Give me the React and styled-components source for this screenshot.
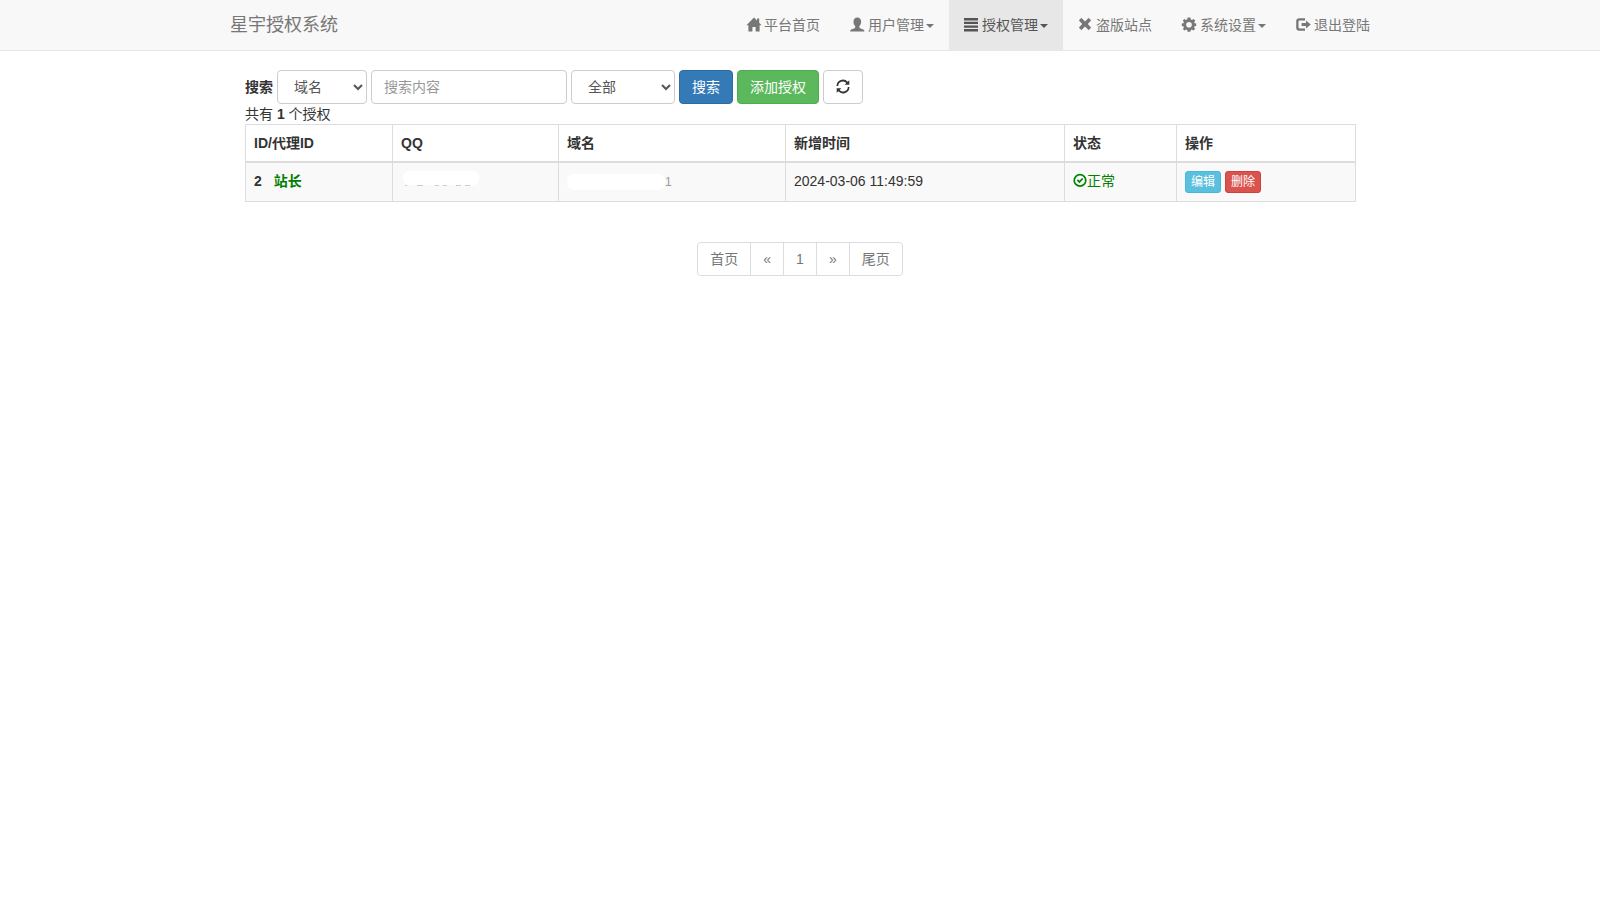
import { useState } from 'react';
import styled, { createGlobalStyle } from 'styled-components';

const GlobalStyle = createGlobalStyle`
  * {
    box-sizing: border-box;
  }
  body {
    margin: 0;
    background-color: #fff;
    color: #333;
    font-family: 'Liberation Sans', 'Noto Sans CJK SC', sans-serif;
    font-size: 14px;
    line-height: 20px;
  }
`;

const Navbar = styled.nav`
  background-color: #f8f8f8;
  border-bottom: 1px solid #e7e7e7;
`;
const NavInner = styled.div`
  display: flex;
  justify-content: space-between;
  max-width: 1170px;
  margin: 0 auto;
`;
const Brand = styled.a`
  padding: 15px;
  color: #777;
  font-size: 18px;
  text-decoration: none;
`;
const NavList = styled.ul`
  display: flex;
  margin: 0;
  padding: 0;
  list-style: none;
`;
const NavLink = styled.a`
  display: flex;
  align-items: center;
  gap: 4px;
  height: 50px;
  padding: 0 15px;
  background-color: ${props => (props.$active ? '#e7e7e7' : 'transparent')};
  color: ${props => (props.$active ? '#555' : '#777')};
  text-decoration: none;
`;
const Caret = styled.span`
  display: inline-block;
  margin-left: 2px;
  border-top: 4px solid;
  border-right: 4px solid transparent;
  border-left: 4px solid transparent;
  vertical-align: middle;
`;
const Svg = styled.svg`
  display: inline-block;
  flex: none;
  width: 14px;
  height: 14px;
  overflow: visible;
  fill: currentColor;
  vertical-align: -2px;
`;

const Main = styled.main`
  max-width: 1170px;
  margin: 0 auto;
  padding: 19px 30px;
`;
const SearchForm = styled.form`
  display: flex;
  align-items: center;
  gap: 4px;
`;
const Label = styled.label`
  font-weight: bold;
`;
const Select = styled.select`
  width: ${props => props.$width};
  height: 34px;
  padding: 6px 12px;
  border: 1px solid #ccc;
  border-radius: 4px;
  background-color: #fff;
  color: #555;
  font: inherit;
`;
const Input = styled.input`
  width: 196px;
  height: 34px;
  padding: 6px 12px;
  border: 1px solid #ccc;
  border-radius: 4px;
  color: #555;
  font: inherit;
  &::placeholder {
    color: #999;
  }
`;
const buttonColors = {
  primary: ['#337ab7', '#2e6da4', '#fff'],
  success: ['#5cb85c', '#4cae4c', '#fff'],
  info: ['#5bc0de', '#46b8da', '#fff'],
  danger: ['#d9534f', '#d43f3a', '#fff'],
  normal: ['#fff', '#ccc', '#333'],
};
const Button = styled.button`
  height: 34px;
  padding: 0 12px;
  border: 1px solid ${props => buttonColors[props.$color][1]};
  border-radius: 4px;
  background-color: ${props => buttonColors[props.$color][0]};
  color: ${props => buttonColors[props.$color][2]};
  font: inherit;
  cursor: pointer;
`;
const SmallButton = styled(Button)`
  height: 22px;
  padding: 0 5px;
  border-radius: 3px;
  font-size: 12px;
  line-height: 18px;
`;
const Actions = styled.div`
  display: flex;
  gap: 4px;
`;

const Table = styled.table`
  width: 100%;
  border: 1px solid #ddd;
  border-collapse: collapse;
  table-layout: fixed;
`;
const Th = styled.th`
  width: ${props => props.$width};
  padding: 8px;
  border: 1px solid #ddd;
  border-bottom-width: 2px;
  text-align: left;
`;
const Td = styled.td`
  padding: 8px;
  border: 1px solid #ddd;
  background-color: #f9f9f9;
  vertical-align: top;
`;
const Owner = styled.b`
  margin-left: 12px;
  color: green;
`;
const Status = styled.span`
  color: green;
`;
const MaskRow = styled.div`
  display: flex;
  flex-direction: ${props => (props.$column ? 'column' : 'row')};
  align-items: ${props => (props.$column ? 'flex-start' : 'center')};
  height: 22px;
  padding-left: ${props => (props.$column ? '2px' : '0')};
  color: #999;
`;
const Mask = styled.span`
  width: ${props => props.$width};
  height: ${props => props.$height};
  border-radius: 6px;
  background-color: #fff;
`;
const MaskTail = styled.span`
  font-size: 12px;
`;
const MaskMarks = styled.svg`
  width: 74px;
  height: 2px;
  fill: #ccc;
`;

const Pagination = styled.ul`
  display: flex;
  justify-content: center;
  margin: 40px 0 20px;
  padding: 0;
  list-style: none;
`;
const PageItem = styled.li`
  & + & {
    margin-left: -1px;
  }
  &:first-child a {
    border-radius: 4px 0 0 4px;
  }
  &:last-child a {
    border-radius: 0 4px 4px 0;
  }
`;
const PageLink = styled.a`
  display: block;
  padding: 6px 12px;
  border: 1px solid #ddd;
  color: #777;
  text-decoration: none;
`;

const icons = {
  home: (
    <path d="M8 -0.6L15.6 7.3H13.6V13.6H9.6V9H6.4V13.6H2.4V7.3H0.4L8 -0.6ZM11 0.4H13.2V5H11Z" />
  ),
  user: (
    <path d="M7.3 -0.4C9.8 -0.4 11.1 1.4 11.1 4C11.1 5.8 10.4 7.2 9.4 8V9.2C9.4 9.9 9.9 10.1 10.6 10.4L13.2 11.4C14.1 11.8 14.4 12.3 14.4 13.6H0.2C0.2 12.3 0.5 11.8 1.4 11.4L4 10.4C4.7 10.1 5.2 9.9 5.2 9.2V8C4.2 7.2 3.5 5.8 3.5 4C3.5 1.4 4.8 -0.4 7.3 -0.4Z" />
  ),
  list: <path d="M0 0H14V2.4H0ZM0 3.7H14V6.1H0ZM0 7.4H14V9.8H0ZM0 11.1H14V13.5H0Z" />,
  remove: (
    <path d="M3.8 0.2L7 3.4L10.2 0.2Q10.6 -0.2 11 0.2L12.8 2Q13.2 2.4 12.8 2.8L9.8 6L12.8 9.2Q13.2 9.6 12.8 10L11 11.8Q10.6 12.2 10.2 11.8L7 8.6L3.8 11.8Q3.4 12.2 3 11.8L1.2 10Q0.8 9.6 1.2 9.2L4.2 6L1.2 2.8Q0.8 2.4 1.2 2L3 0.2Q3.4 -0.2 3.8 0.2Z" />
  ),
  cog: (
    <path
      fillRule="evenodd"
      d="M5.6 -0.4H8.4L8.8 1.4L10 1.9L11.6 0.9L13.2 2.6L12.2 4.2L12.6 5.2L14.2 5.6V7.9L12.6 8.3L12.1 9.4L13.1 11L11.5 12.6L9.9 11.6L8.8 12.1L8.4 13.7H5.6L5.2 12.1L4.1 11.6L2.5 12.6L0.9 11L1.9 9.4L1.4 8.3L-0.2 7.9V5.6L1.4 5.2L1.9 4.2L0.8 2.6L2.4 0.9L4 1.9L5.2 1.4ZM7 4A2.8 2.8 0 1 0 7 9.6A2.8 2.8 0 1 0 7 4Z"
    />
  ),
  logout: (
    <path d="M9 0.3V2.5H3.8Q2.5 2.5 2.5 3.8V9.2Q2.5 10.5 3.8 10.5H9V12.7H3.2Q0.2 12.7 0.2 9.7V3.3Q0.2 0.3 3.2 0.3ZM10 2.6L14.8 6.5L10 10.4V8H5.6V5H10Z" />
  ),
  refresh: (
    <path d="M0.5 6A6.5 6.5 0 0 1 11.7 1.7L13.3 0.2V4.8H8.6L10.4 3A4.7 4.7 0 0 0 2.2 6ZM13.5 7A6.5 6.5 0 0 1 2.3 11.3L0.7 12.8V8.2H5.4L3.6 10A4.7 4.7 0 0 0 11.8 7Z" />
  ),
  ok: (
    <path
      fillRule="evenodd"
      d="M7 -0.2A6.6 6.6 0 1 0 7 13A6.6 6.6 0 1 0 7 -0.2ZM7 1.5A4.9 4.9 0 1 1 7 11.3A4.9 4.9 0 1 1 7 1.5ZM3.8 6.5L5 5.3L6.4 6.7L9.1 3.9L10.3 5.1L6.4 9.2Z"
    />
  ),
};

const Icon = ({ name }) => (
  <Svg viewBox="0 0 14 14" aria-hidden="true">
    {icons[name]}
  </Svg>
);

const menus = [
  { icon: 'home', text: '平台首页' },
  { icon: 'user', text: '用户管理', caret: true },
  { icon: 'list', text: '授权管理', caret: true, active: true },
  { icon: 'remove', text: '盗版站点' },
  { icon: 'cog', text: '系统设置', caret: true },
  { icon: 'logout', text: '退出登陆' },
];

const columns = [
  { text: 'ID/代理ID', width: '147px' },
  { text: 'QQ', width: '166px' },
  { text: '域名', width: '227px' },
  { text: '新增时间', width: '279px' },
  { text: '状态', width: '112px' },
  { text: '操作', width: '179px' },
];

const pages = ['首页', '«', '1', '»', '尾页'];

const App = () => {
  const [type, setType] = useState('域名');
  const [keyword, setKeyword] = useState('');
  const [state, setState] = useState('全部');

  return (
    <>
      <GlobalStyle />
      <Navbar>
        <NavInner>
          <Brand href="#">星宇授权系统</Brand>
          <NavList>
            {menus.map(menu => (
              <li key={menu.text}>
                <NavLink href="#" $active={menu.active}>
                  <Icon name={menu.icon} />
                  <span>
                    {menu.text}
                    {menu.caret && <Caret />}
                  </span>
                </NavLink>
              </li>
            ))}
          </NavList>
        </NavInner>
      </Navbar>
      <Main>
        <SearchForm onSubmit={e => e.preventDefault()}>
          <Label htmlFor="type">搜索</Label>
          <Select
            id="type"
            $width="90px"
            value={type}
            onChange={e => setType(e.target.value)}
          >
            <option>域名</option>
            <option>QQ</option>
          </Select>
          <Input
            name="keyword"
            aria-label="搜索内容"
            placeholder="搜索内容"
            value={keyword}
            onChange={e => setKeyword(e.target.value)}
          />
          <Select
            aria-label="状态"
            $width="104px"
            value={state}
            onChange={e => setState(e.target.value)}
          >
            <option>全部</option>
            <option>正常</option>
          </Select>
          <Button type="submit" $color="primary">
            搜索
          </Button>
          <Button type="button" $color="success">
            添加授权
          </Button>
          <Button type="button" $color="normal" aria-label="刷新">
            <Icon name="refresh" />
          </Button>
        </SearchForm>
        <div>
          共有 <b>1</b> 个授权
        </div>
        <Table>
          <thead>
            <tr>
              {columns.map(column => (
                <Th key={column.text} $width={column.width}>
                  {column.text}
                </Th>
              ))}
            </tr>
          </thead>
          <tbody>
            <tr>
              <Td>
                <b>2</b>
                <Owner>站长</Owner>
              </Td>
              <Td>
                <MaskRow $column>
                  <Mask $width="76px" $height="14px" />
                  <MaskMarks viewBox="0 0 74 2" aria-hidden="true">
                    <path d="M2 0h2v1h-2zM14 0h6v1h-6zM32 0h4v1h-4zM40 0h4v1h-4zM53 0h5v1h-5zM62 0h5v1h-5z" />
                  </MaskMarks>
                </MaskRow>
              </Td>
              <Td>
                <MaskRow>
                  <Mask $width="98px" $height="16px" />
                  <MaskTail>1</MaskTail>
                </MaskRow>
              </Td>
              <Td>2024-03-06 11:49:59</Td>
              <Td>
                <Status>
                  <Icon name="ok" />
                  正常
                </Status>
              </Td>
              <Td>
                <Actions>
                  <SmallButton type="button" $color="info">
                    编辑
                  </SmallButton>
                  <SmallButton type="button" $color="danger">
                    删除
                  </SmallButton>
                </Actions>
              </Td>
            </tr>
          </tbody>
        </Table>
        <Pagination>
          {pages.map(page => (
            <PageItem key={page}>
              <PageLink href="#">{page}</PageLink>
            </PageItem>
          ))}
        </Pagination>
      </Main>
    </>
  );
};

export default App;
